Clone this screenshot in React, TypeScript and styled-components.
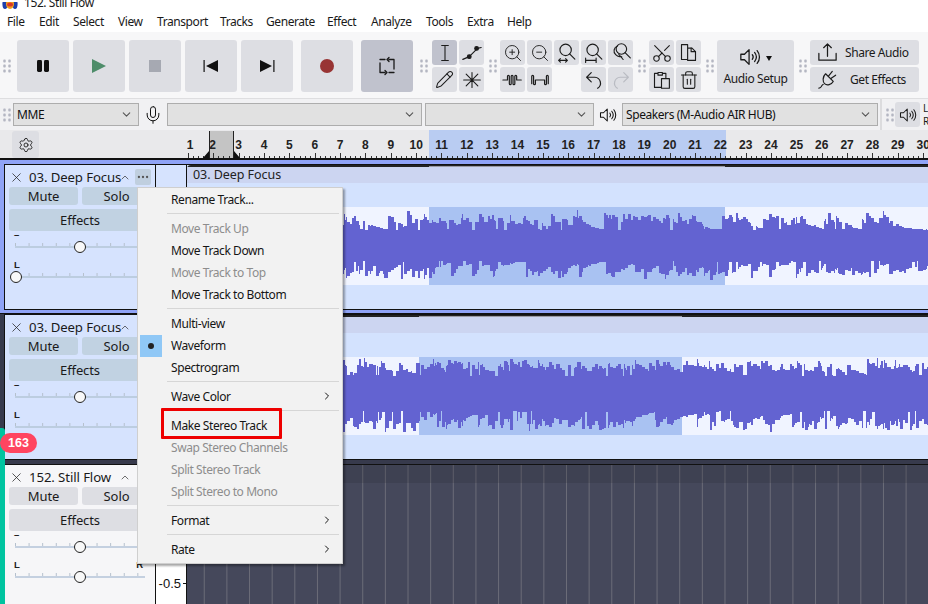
import React from "react";
import styled, { createGlobalStyle } from "styled-components";
import { ChevronDown, ChevronRight, ChevronUp, Ellipsis, Mic, Pencil, Scissors, Settings, Trash2, X, ZoomIn, ZoomOut } from "lucide-react";

const UI = `"Noto Sans", "Open Sans", sans-serif`;

const Global = createGlobalStyle`
  html, body { margin: 0; padding: 0; background: #fff; overflow: hidden; }
  * { box-sizing: border-box; }
`;

const Page = styled.div`
  position: relative; width: 928px; height: 604px; overflow: hidden;
  font-family: ${UI}; font-size: 12px; letter-spacing: -0.42px; color: #1a1a1a; background: #fff;
  display: flex; flex-direction: column;
`;
const TitleBar = styled.div`
  height: 10px; overflow: hidden; display: flex; align-items: flex-end; gap: 6px; padding-left: 2px; background: #fff;
  span { line-height: 16px; margin-bottom: -1px; }
`;
const MenuBar = styled.div`display: flex; height: 22px; align-items: center; padding-left: 7px; background: #fff;`;
const MenuName = styled.div<{ $w: number }>`width: ${p => p.$w}px; white-space: nowrap;`;

const Toolbar = styled.div`
  height: 66px; padding-top: 8px; display: flex; align-items: flex-start; background: #f7f7f8; border-bottom: 0;
`;
const Group = styled.div<{ $ml?: number; $after?: number }>`
  display: flex; align-items: center; height: 52px; margin-left: ${p => p.$ml ?? 5}px;
  & > span:first-child { margin-right: ${p => p.$after ?? 3}px; }
`;
const Grip = styled.span`
  display: block; width: 8px; height: 14px; flex: none;
  background-image: radial-gradient(circle at center, #b4b6c2 1.3px, transparent 1.5px);
  background-size: 5px 5px; background-position: -1px -0.5px;
`;
const Transport = styled.div`display: flex; gap: 4px;`;
const BigBtn = styled.div<{ $active?: boolean; $ml?: number }>`
  width: 52px; height: 52px; border-radius: 3px; display: flex; align-items: center; justify-content: center;
  background: ${p => (p.$active ? "#c0c2cd" : "#dddee3")}; margin-left: ${p => p.$ml ?? 0}px;
`;
const SmallGrid = styled.div<{ $cols: number }>`
  display: grid; grid-template-columns: repeat(${p => p.$cols}, 25px); grid-auto-rows: 25px; gap: 2px;
`;
const SmallBtn = styled.div<{ $active?: boolean; $disabled?: boolean }>`
  border-radius: 3px; display: flex; align-items: center; justify-content: center;
  background: ${p => (p.$active ? "#c0c2cd" : "#dddee3")}; color: ${p => (p.$disabled ? "#b9bbc2" : "#1c1c1c")};
`;
const SetupBtn = styled.div`
  width: 77px; height: 52px; border-radius: 3px; background: #dddee3; display: flex; flex-direction: column; align-items: center;
  padding-top: 3px; font-size: 12px; line-height: 16px;
`;
const SetupIcon = styled.div`display: flex; align-items: center; gap: 5px; height: 28px; margin-bottom: 0;`;
const Caret = styled.i`width: 0; height: 0; border-left: 3.5px solid transparent; border-right: 3.5px solid transparent; border-top: 5px solid #111; margin-top: 2px;`;
const ShareCol = styled.div`display: flex; flex-direction: column; gap: 2px;`;
const ShareBtn = styled.div<{ $pl: number }>`
  width: 109px; height: 25px; border-radius: 3px; background: #dddee3; display: flex; align-items: center;
  padding-left: 6px; font-size: 12px; white-space: nowrap;
  span { margin-left: ${p => p.$pl}px; }
`;

const DeviceRow = styled.div`
  height: 32px; border-top: 1px solid #dedee0; background: #f1f1f3; display: flex; align-items: center; padding-left: 3px;
`;
const Select = styled.div<{ $w: number; $ml: number }>`
  width: ${p => p.$w}px; height: 23px; margin-left: ${p => p.$ml}px; flex: none; background: #e1e1e1; border: 1px solid #adadad;
  display: flex; align-items: center; justify-content: space-between; padding: 0 5px 0 3px; font-size: 12px; color: #111;
`;
const DeviceIcon = styled.div<{ $w: number }>`width: ${p => p.$w}px; flex: none; display: flex; justify-content: center; color: #111;`;
const VDivider = styled.div`width: 2px; height: 32px; margin-left: 2px; background: #dcdcde; flex: none;`;
const SpeakerBtn = styled.div`
  width: 25px; height: 25px; margin-left: 1px; flex: none; border-radius: 3px; background: #dddee3; display: flex; align-items: center; justify-content: center;
`;
const Meter = styled.div`font-size: 10px; line-height: 13px; margin-left: 3px; flex: none;`;

const RulerRow = styled.div`
  height: 30px; background: #e9e9eb; border-bottom: 2px solid #111; display: flex; padding-left: 12px;
`;
const GearBtn = styled.div`
  width: 27px; height: 27px; margin-top: 1px; flex: none; border-radius: 3px; background: #dddee3; display: flex; align-items: center; justify-content: center;
`;
const RulerSvg = styled.svg`
  display: block; flex: none;
  text { font-family: "Liberation Sans", Arial, sans-serif; font-size: 12px; font-weight: 700; fill: #222; text-anchor: middle; letter-spacing: 0; }
`;

const TrackOne = styled.div`background: #8fa3f6; padding: 4px 0 3px 4px;`;
const TrackTwo = styled.div`background: #373a4c; border-top: 1px solid #111; padding: 0 0 4px 4px;`;
const TrackThree = styled.div`
  flex: 1; min-height: 0; display: flex; border-top: 1px solid #111; background: #f6f6f8; padding-left: 5px;
`;
const TrackInner = styled.div`
  height: 146px; display: flex; border: 1px solid #111; border-right: 0; background: #d6e3fe;
`;
const Panel = styled.div<{ $light?: boolean }>`
  width: 151px; flex: none; border-right: 1px solid #111; padding: 4px 4px 0;
  background: ${p => (p.$light ? "#f6f6f8" : "#d6e3fe")}; display: flex; flex-direction: column;
`;
const TitleRow = styled.div`display: flex; align-items: center; height: 16px; font-size: 13.2px; margin-bottom: 2px; letter-spacing: -0.1px;`;
const CloseGlyph = styled.div`width: 20px; flex: none; display: flex; justify-content: flex-start; color: #222;`;
const TrackName = styled.div`width: 90px; flex: none; white-space: nowrap;`;
const Collapse = styled.div`width: 12px; flex: none; display: flex; justify-content: center; color: #222;`;
const MoreBtn = styled.div`
  width: 16px; height: 16px; margin-left: 4px; flex: none; border-radius: 2px; background: #c0cfdf; color: #555; display: flex; align-items: center; justify-content: center;
`;
const PairRow = styled.div`display: flex; gap: 4px;`;
const PanelBtn = styled.div<{ $light?: boolean; $h: number; $wide?: boolean }>`
  height: ${p => p.$h}px; flex: ${p => (p.$wide ? "none" : "1")}; border-radius: 3px; background: ${p => (p.$light ? "#dddee3" : "#c1d2e2")};
  display: flex; align-items: center; justify-content: center; font-size: 13px; letter-spacing: -0.1px;
  margin-top: ${p => (p.$wide ? 4 : 0)}px;
`;
const SliderLabels = styled.div<{ $h: number }>`
  height: ${p => p.$h}px; display: flex; justify-content: space-between; align-items: flex-end; padding: 0 8px 1px 5px;
  font: 700 9.5px/10px "Liberation Sans", sans-serif; color: #222; letter-spacing: 0;
`;
const Slider = styled.div<{ $light?: boolean }>`
  position: relative; height: 12px; margin: 0 6px; 
  &::before { content: ""; position: absolute; left: 0; right: 0; top: 5px; height: 2px; background: ${p => (p.$light ? "#c4d0e0" : "#bccde0")}; }
  &::after { content: ""; position: absolute; left: 0; right: 0; top: 2px; height: 3px;
    background-image: linear-gradient(to right, #b4bfcc 1px, transparent 1px); background-size: 13.6px 100%; }
`;
const Thumb = styled.div<{ $x: number }>`
  position: absolute; z-index: 1; left: ${p => p.$x}px; top: 0; width: 12px; height: 12px; border-radius: 50%;
  background: #f8f8f8; border: 1.4px solid #222;
`;

const VRuler = styled.div<{ $light?: boolean }>`
  width: 31px; flex: none; border-right: 1px solid #111; background: ${p => (p.$light ? "#fff" : "#d6e3fe")};
`;
const VRulerEnd = styled(VRuler)`
  display: flex; justify-content: flex-end; align-items: flex-end; padding-bottom: 12px;
  font: 13px/16px "Liberation Sans", sans-serif; color: #111; letter-spacing: 0;
  span::after { content: ""; display: inline-block; width: 3px; height: 1px; background: #111; margin: 0 0 4px 2px; }
`;
const Clip = styled.div`
  flex: 1; min-width: 0; display: flex; flex-direction: column; border-top-left-radius: 4px; overflow: hidden;
`;
const ClipTop = styled.div<{ $x: number; $w: number }>`
  height: 2px; flex: none; background-color: #222;
  background-image: linear-gradient(#9a9aa4, #9a9aa4);
  background-repeat: no-repeat; background-size: ${p => p.$w}px 1px; background-position: ${p => p.$x}px 1px;
`;
const ClipHeader = styled.div`
  height: 16px; background: #ccd5f1; padding-left: 6px; font-size: 12.5px; line-height: 15px; letter-spacing: -0.05px; color: #222; flex: none;
`;
const WaveBody = styled.svg`display: block; flex: none; background: #d3e2fe;`;
const DarkClip = styled.div`
  flex: 1; min-width: 0; display: flex; flex-direction: column; 
  background-color: #45485b;
  background-image: linear-gradient(to right, #6b6c78 1px, transparent 1px);
  background-size: 22.65px 100%; background-position: 16.75px 0;
`;
const DarkHeader = styled.div`height: 18px; background: rgba(40, 40, 50, 0.22); flex: none;`;

const Menu = styled.div`
  position: absolute; z-index: 5; left: 137px; top: 187px; width: 206px; height: 377px; background: #f2f2f2; border: 1px solid #cfcfcf;
  box-shadow: 2px 2px 2px rgba(0, 0, 0, 0.35); font-size: 12px; color: #111; 
`;
const Row = styled.div<{ $disabled?: boolean }>`
  height: 22px; display: flex; align-items: center; padding-left: 33px; padding-right: 9px;
  justify-content: space-between; color: ${p => (p.$disabled ? "#8d8d8d" : "#151515")};
`;
const Sep = styled.div`height: 7px; display: flex; align-items: center; padding: 0 3px 0 29px; &::after { content: ""; flex: 1; height: 1px; background: #d6d6d6; }`;
const CheckBox = styled.div`
  position: absolute; left: 2px; top: 147px; width: 22px; height: 22px; background: #90c8f6; display: flex; align-items: center; justify-content: center;
  &::after { content: ""; width: 6px; height: 6px; border-radius: 50%; background: #222; }
`;
const Highlight = styled.div`
  position: absolute; z-index: 6; left: 161px; top: 408px; width: 121px; height: 31px; border: 3px solid #ee0000; border-radius: 1px;
`;
const GreenStrip = styled.div`
  position: absolute; z-index: 3; left: 0; top: 428px; width: 5px; height: 176px; background: #00c4a0; border-radius: 0 3px 0 0;
`;
const Badge = styled.div`
  position: absolute; z-index: 4; left: 0; top: 433px; width: 37px; height: 20px; border-radius: 10px; background: #ff4560; color: #fff;
  display: flex; align-items: center; justify-content: center; font: 700 12.5px "Liberation Sans", sans-serif; letter-spacing: 0;
`;

const Ico = ({ children, s = 24, stroke = 1.3 }: { children: React.ReactNode; s?: number; stroke?: number }) => (
  <svg width={s} height={s} viewBox="0 0 24 24" fill="none" stroke="currentColor" strokeWidth={stroke} strokeLinecap="round" strokeLinejoin="round">{children}</svg>
);
const Speaker = ({ s = 20 }: { s?: number }) => (
  <Ico s={s} stroke={1.4}>
    <path d="M2 9h4l5-5v16l-5-5H2z" />
    <path d="M14.5 9.5a4 4 0 0 1 0 5M17 7a8 8 0 0 1 0 10M19.8 5a11 11 0 0 1 0 14" />
  </Ico>
);
const Magnifier = ({ cx = 11, cy = 9, r = 6.5 }) => (
  <>
    <circle cx={cx} cy={cy} r={r} />
    <path d={`M${cx + r * 0.7} ${cy + r * 0.7}L${cx + r * 0.7 + 6} ${cy + r * 0.7 + 6}`} />
  </>
);

const rng = (seed: number) => () => {
  seed = (seed * 1664525 + 1013904223) >>> 0;
  return seed / 4294967296;
};
const wavePath = (seed: number, width: number, center: number, topMin: number, topMax: number, botMin: number, botMax: number, pBurst: number) => {
  const r = rng(seed);
  r(); r();
  const top: [number, number][] = [];
  const bot: [number, number][] = [];
  let x = 0, env = 0.8, envB = 0.8;
  const amp = (lo: number, hi: number, e: number) => {
    if (r() < 0.07) return lo + (hi - lo) * 0.06 * r();
    return lo + (hi - lo) * Math.min(1, e * (0.6 + r() * 0.5));
  };
  while (x < width) {
    const w = 1 + Math.floor(r() * 3);
    if (r() < pBurst) env = 0.8 + r() * 0.3;
    if (r() < pBurst) envB = 0.8 + r() * 0.3;
    env *= 0.82; envB *= 0.82;
    const a = amp(topMin, topMax, env);
    const b = amp(botMin, botMax, envB);
    top.push([x, center - a], [x + w, center - a]);
    bot.push([x, center + b], [x + w, center + b]);
    x += w;
  }
  const pts = [...top, ...bot.reverse()];
  return "M" + pts.map(p => `${p[0]} ${p[1].toFixed(0)}`).join("L") + "Z";
};

const Wave = ({ sel, path }: { sel: [number, number]; path: string }) => (
  <WaveBody width={741} height={126} viewBox="0 0 741 126">
    <rect x="0" y="24" width="741" height="78" fill="#f0f4ff" />
    <rect x={sel[0] - 187} y="24" width={sel[1] - sel[0]} height="78" fill="#a9c2f2" />
    <path d={path} fill="#6363d1" />
  </WaveBody>
);

const PATH_A = wavePath(7, 741, 63, 16, 37, 15, 36, 0.2);
const PATH_B = wavePath(23, 741, 63, 20, 39, 15, 38, 0.38);

const ticks: number[] = [];
for (let x = 188; x < 928; x += 5.07) ticks.push(x);
const nums = Array.from({ length: 30 }, (_, i) => i + 1);
const numX = (n: number) => (n === 1 ? 190 : n === 2 ? 212.5 : 188 + (n - 1) * 25.35);

const TrackHead = ({ name, more, light, gainThumb, panThumb, r, labelGap }: { name: string; more?: boolean; light?: boolean; gainThumb: number; panThumb?: number; r?: boolean; labelGap: number }) => (
  <Panel $light={light}>
    <TitleRow>
      <CloseGlyph><X size={15} strokeWidth={1.2} /></CloseGlyph>
      <TrackName>{name}</TrackName>
      <Collapse><ChevronUp size={15} strokeWidth={1.3} /></Collapse>
      {more && <MoreBtn><Ellipsis size={14} /></MoreBtn>}
    </TitleRow>
    <PairRow>
      <PanelBtn $h={18} $light={light}>Mute</PanelBtn>
      <PanelBtn $h={18} $light={light}>Solo</PanelBtn>
    </PairRow>
    <PanelBtn $h={22} $wide $light={light}>Effects</PanelBtn>
    <SliderLabels $h={10}><span>–</span></SliderLabels>
    <Slider $light={light}><Thumb $x={gainThumb} /></Slider>
    <SliderLabels $h={labelGap}><span>L</span>{r && <span>R</span>}</SliderLabels>
    <Slider $light={light}>{panThumb !== undefined && <Thumb $x={panThumb} />}</Slider>
  </Panel>
);

export default function App() {
  return (
    <Page>
      <Global />
      <TitleBar>
        <svg width="16" height="8" viewBox="0 0 16 8"><ellipse cx="3" cy="2" rx="2.6" ry="5" fill="#1c3fae" /><ellipse cx="13" cy="2" rx="2.6" ry="5" fill="#1c3fae" /><ellipse cx="8" cy="2" rx="4" ry="5" fill="#f0a020" /><ellipse cx="8" cy="2.5" rx="3" ry="2" fill="#d8382a" /></svg>
        <span>152. Still Flow</span>
      </TitleBar>
      <MenuBar>
        {([["File", 32], ["Edit", 34], ["Select", 45], ["View", 39], ["Transport", 63], ["Tracks", 46], ["Generate", 61], ["Effect", 44], ["Analyze", 55], ["Tools", 41], ["Extra", 40], ["Help", 30]] as [string, number][]).map(([n, w]) => (
          <MenuName key={n} $w={w}>{n}</MenuName>
        ))}
      </MenuBar>

      <Toolbar>
        <Group $ml={3} $after={6}>
          <Grip />
          <Transport>
            <BigBtn><svg width="24" height="24" viewBox="0 0 24 24" fill="#111"><rect x="6" y="6" width="5" height="12" rx="1.4" /><rect x="13" y="6" width="5" height="12" rx="1.4" /></svg></BigBtn>
            <BigBtn><svg width="24" height="24" viewBox="0 0 24 24" fill="#4e8d6a"><path d="M5 5l14 7-14 7z" /></svg></BigBtn>
            <BigBtn><svg width="24" height="24" viewBox="0 0 24 24" fill="#a6a9b2"><rect x="6" y="6" width="12" height="12" /></svg></BigBtn>
            <BigBtn><svg width="24" height="24" viewBox="0 0 24 24" fill="#111"><rect x="4.5" y="6" width="1.2" height="12" /><path d="M19 6v12L7 12z" /></svg></BigBtn>
            <BigBtn><svg width="24" height="24" viewBox="0 0 24 24" fill="#111"><rect x="18.3" y="6" width="1.2" height="12" /><path d="M5 6v12l12-6z" /></svg></BigBtn>
            <BigBtn $ml={4}><svg width="24" height="24" viewBox="0 0 24 24" fill="#983434"><circle cx="12" cy="12" r="7" /></svg></BigBtn>
            <BigBtn $ml={4} $active><Ico s={24} stroke={1.3}><path d="M14 5.5H19V15M14 3.5l-2 2 2 2M10 18.5H5V9M10 20.5l2-2-2-2M5 5.5h5M19 18.5h-5" /></Ico></BigBtn>
          </Transport>
        </Group>
        <Group $ml={7} $after={4}>
          <Grip />
          <SmallGrid $cols={2}>
            <SmallBtn $active><Ico s={20} stroke={1.3}><path d="M8 3h8M8 21h8M12 3v18" /></Ico></SmallBtn>
            <SmallBtn><Ico s={22}><path d="M2 19l7-3 9-9 4-1" /><circle cx="9" cy="16" r="2" fill="currentColor" /><circle cx="17" cy="7" r="2" fill="currentColor" /></Ico></SmallBtn>
            <SmallBtn><Pencil size={19} strokeWidth={1.3} /></SmallBtn>
            <SmallBtn><Ico s={20}><path d="M2 12h20M12 3v18M5 5l14 14M19 5L5 19" /></Ico></SmallBtn>
          </SmallGrid>
        </Group>
        <Group>
          <Grip />
          <SmallGrid $cols={5}>
            <SmallBtn><ZoomIn size={20} strokeWidth={1.1} /></SmallBtn>
            <SmallBtn><ZoomOut size={20} strokeWidth={1.1} /></SmallBtn>
            <SmallBtn><Ico s={21}><Magnifier /><path d="M3 21h10M3 21l2-2M3 21l2 2M13 21l-2-2M13 21l-2 2" /></Ico></SmallBtn>
            <SmallBtn><Ico s={21}><Magnifier /><path d="M3 21h12M3 18.5v5M15 18.5v5" /></Ico></SmallBtn>
            <SmallBtn><Ico s={21}><Magnifier cx={13} cy={8} r={6} /><path d="M8.5 4.5a6 6 0 0 0-2 10 6 6 0 0 0 6 2l1 .6M10 14l5 6" /></Ico></SmallBtn>
            <SmallBtn><Ico s={22}><path d="M1 12h5V8a1 1 0 0 1 2 0v8a1 1 0 0 0 2 0V8a1 1 0 0 1 2 0v8a1 1 0 0 0 2 0V8a1 1 0 0 1 2 0v4h5" /></Ico></SmallBtn>
            <SmallBtn><Ico s={22}><path d="M3 8a1 1 0 0 1 2 0v8a1 1 0 0 0 2 0V12h10v4a1 1 0 0 0 2 0V8a1 1 0 0 1 2 0v8M3 8v8" /></Ico></SmallBtn>
            <span />
            <SmallBtn><Ico s={22}><path d="M9 4L4 9l5 5M4 9h9a6.5 6.5 0 0 1 3 12" /></Ico></SmallBtn>
            <SmallBtn $disabled><Ico s={22}><path d="M15 4l5 5-5 5M20 9h-9a6.5 6.5 0 0 0-3 12" /></Ico></SmallBtn>
          </SmallGrid>
        </Group>
        <Group>
          <Grip />
          <SmallGrid $cols={2}>
            <SmallBtn><Scissors size={22} strokeWidth={1.2} style={{ transform: "rotate(-90deg)" }} /></SmallBtn>
            <SmallBtn><Ico s={21}><path d="M4 3h7v17H4zM11 7h5l4 4v10h-9" /><path d="M15 7v4h5" /></Ico></SmallBtn>
            <SmallBtn><Ico s={21}><path d="M8 4h5v3H8zM8 5H4v16h8M13 5h4v5" /><rect x="12" y="11" width="9" height="11" /></Ico></SmallBtn>
            <SmallBtn><Trash2 size={20} strokeWidth={1.3} /></SmallBtn>
          </SmallGrid>
        </Group>
        <Group>
          <Grip />
          <SetupBtn>
            <SetupIcon><Speaker s={22} /><Caret /></SetupIcon>
            Audio Setup
          </SetupBtn>
        </Group>
        <Group>
          <Grip />
          <ShareCol>
            <ShareBtn $pl={6}><Ico s={23}><path d="M3 13v7h18v-7M12 16V3M8 7l4-4 4 4" /></Ico><span>Share Audio</span></ShareBtn>
            <ShareBtn $pl={11}><Ico s={23} stroke={1.2}><path d="M10 6l8 8c-2 3.5-6.5 4.5-8.8 2.6C6.6 14.5 6.8 9 10 6z" /><path d="M13 8.5l4-5M15.5 11l5-3.5M7.5 17c-1 1-1.5 1-2 2.5s-2 1.5-2.5 1.5" /></Ico><span>Get Effects</span></ShareBtn>
          </ShareCol>
        </Group>
      </Toolbar>

      <DeviceRow>
        <Grip />
        <Select $w={126} $ml={2}><span>MME</span><ChevronDown size={13} color="#555" /></Select>
        <DeviceIcon $w={28}><Mic size={20} strokeWidth={1.2} /></DeviceIcon>
        <Select $w={255} $ml={0}><span /><ChevronDown size={13} color="#555" /></Select>
        <Select $w={169} $ml={3}><span /><ChevronDown size={13} color="#555" /></Select>
        <DeviceIcon $w={28}><Speaker s={18} /></DeviceIcon>
        <Select $w={256} $ml={0}><span>Speakers (M-Audio AIR HUB)</span><ChevronDown size={13} color="#555" /></Select>
        <VDivider />
        <Group $ml={4} $after={0}><Grip /></Group>
        <SpeakerBtn><Speaker s={18} /></SpeakerBtn>
        <Meter>L<br />R</Meter>
      </DeviceRow>

      <RulerRow>
        <GearBtn><Settings size={16} strokeWidth={1.3} /></GearBtn>
        <RulerSvg width="889" height="28" viewBox="39 0 889 28">
          <rect x="429" y="0" width="297" height="28" fill="#b9ccf2" />
          <rect x="210" y="1" width="23" height="27" fill="#c4c4c4" />
          {ticks.map((x, i) => (
            <rect key={i} x={Math.round(x)} y={i % 5 === 0 ? 23 : 26} width="1" height={i % 5 === 0 ? 5 : 2} fill="#333" />
          ))}
          {nums.map(n => (
            <text key={n} x={numX(n)} y="18.5">{n}</text>
          ))}
          <path d="M209.5 1v27M233.5 1v27" stroke="#222" strokeWidth="1" />
          <path d="M209 21l-6 7h6zM234 21l6 7h-6z" fill="#111" />
        </RulerSvg>
      </RulerRow>

      <TrackOne>
        <TrackInner>
          <TrackHead name="03. Deep Focus" more gainThumb={59} panThumb={-5} labelGap={18} />
          <VRuler />
          <Clip>
            <ClipTop $x={242} $w={296} />
            <ClipHeader>03. Deep Focus</ClipHeader>
            <Wave sel={[429, 725]} path={PATH_A} />
          </Clip>
        </TrackInner>
      </TrackOne>
      <TrackTwo>
        <TrackInner>
          <TrackHead name="03. Deep Focus" gainThumb={59} labelGap={18} />
          <VRuler />
          <Clip>
            <ClipTop $x={232} $w={263} />
            <ClipHeader />
            <Wave sel={[419, 682]} path={PATH_B} />
          </Clip>
        </TrackInner>
      </TrackTwo>
      <TrackThree>
        <TrackHead name="152. Still Flow" light gainThumb={59} panThumb={59} r labelGap={18} />
        <VRulerEnd $light><span>-0.5</span></VRulerEnd>
        <DarkClip><DarkHeader /></DarkClip>
      </TrackThree>

      <GreenStrip />
      <Badge>163</Badge>

      <Menu>
        <Row>Rename Track...</Row>
        <Sep />
        <Row $disabled>Move Track Up</Row>
        <Row>Move Track Down</Row>
        <Row $disabled>Move Track to Top</Row>
        <Row>Move Track to Bottom</Row>
        <Sep />
        <Row>Multi-view</Row>
        <Row>Waveform</Row>
        <Row>Spectrogram</Row>
        <Sep />
        <Row>Wave Color<ChevronRight size={12} /></Row>
        <Sep />
        <Row>Make Stereo Track</Row>
        <Row $disabled>Swap Stereo Channels</Row>
        <Row $disabled>Split Stereo Track</Row>
        <Row $disabled>Split Stereo to Mono</Row>
        <Sep />
        <Row>Format<ChevronRight size={12} /></Row>
        <Sep />
        <Row>Rate<ChevronRight size={12} /></Row>
        <CheckBox />
      </Menu>
      <Highlight />
    </Page>
  );
}
